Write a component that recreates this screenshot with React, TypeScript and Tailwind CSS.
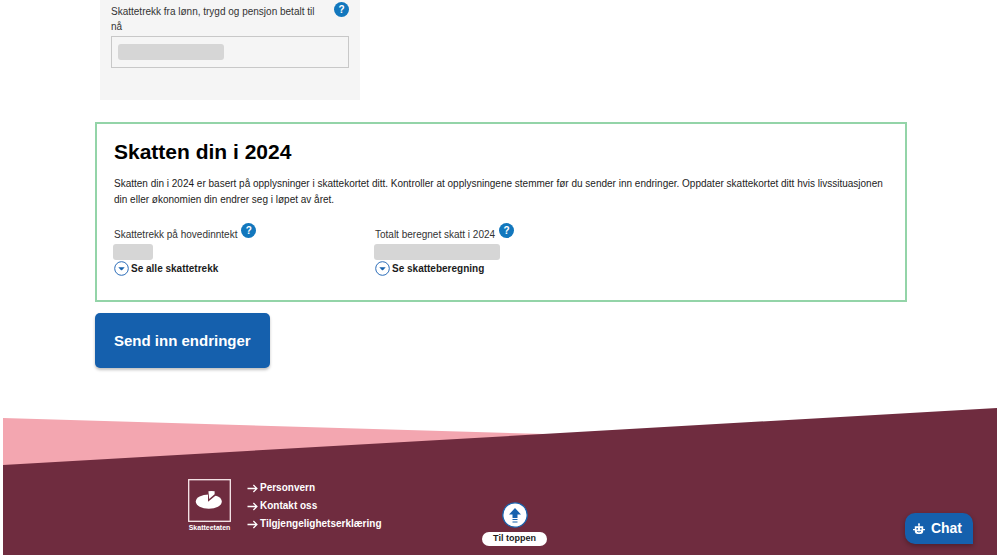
import React from "react";

function HelpButton({ label }: { label: string }) {
  return (
    <button
      type="button"
      aria-label={label}
      className="flex size-[15px] shrink-0 items-center justify-center rounded-full bg-[#1277bd] text-[10px] leading-none font-bold text-white"
    >
      ?
    </button>
  );
}

function ExpandButton({ children }: { children: React.ReactNode }) {
  return (
    <button type="button" className="flex items-center gap-[2px] text-[10px] leading-[15px] font-bold">
      <svg viewBox="0 0 15 15" className="size-[15px]" aria-hidden="true">
        <circle cx="7.5" cy="7.5" r="6.8" fill="#fff" stroke="#2a6cb8" strokeWidth="1" />
        <path d="M4.3 6.2h6.4L8.2 9q-.7.7-1.4 0z" fill="#1762ae" />
      </svg>
      {children}
    </button>
  );
}

function Figure({ label, bar, action }: { label: string; bar: string; action: string }) {
  return (
    <div className="flex flex-col items-start">
      <div className="flex items-start gap-1">
        <span className="pt-1 text-[10px] leading-[15px] text-[#333]">{label}</span>
        <HelpButton label={`Hjelp: ${label}`} />
      </div>
      <div className={`-ml-px mt-[2px] mb-px h-4 rounded-[3px] bg-[#d6d6d6] ${bar}`} />
      <ExpandButton>{action}</ExpandButton>
    </div>
  );
}

function FooterLink({ children }: { children: React.ReactNode }) {
  return (
    <a href="#" className="flex items-center gap-[2px] text-[10px] leading-[18px] font-bold text-white">
      <svg viewBox="0 0 11 9" className="h-[9px] w-[11px]" fill="none" stroke="currentColor" strokeWidth="1.3" aria-hidden="true">
        <path d="M.5 4.5h9.2M6.4 1l3.5 3.5L6.4 8" />
      </svg>
      {children}
    </a>
  );
}

export default function App() {
  return (
    <div className="bg-white font-['Liberation_Sans',Arial,sans-serif] text-[#1c1c1c]">
      <main className="pr-[93px] pl-[95px]">
        <section className="ml-[5px] w-[260px] bg-[#f5f5f5] px-[11px] pt-[2px] pb-8">
          <div className="flex items-start justify-between">
            <label htmlFor="trekk" className="w-[212px] pt-[2px] text-[10px] leading-[15px] text-[#333]">
              Skattetrekk fra lønn, trygd og pensjon betalt til nå
            </label>
            <HelpButton label="Hjelp: skattetrekk" />
          </div>
          <div className="relative mt-[2px]">
            <input id="trekk" readOnly className="block h-8 w-full border border-[#c8c8c8] bg-transparent" />
            <div className="absolute top-2 left-[7px] h-4 w-[106px] rounded-[3px] bg-[#d6d6d6]" />
          </div>
        </section>

        <section className="mt-[22px] border-2 border-[#93d4a8] px-[17px] pt-[14px] pb-6">
          <h1 className="text-[21px] leading-7 font-bold text-black">Skatten din i 2024</h1>
          <p className="mt-[10px] text-[10px] leading-4">
            Skatten din i 2024 er basert på opplysninger i skattekortet ditt. Kontroller at opplysningene stemmer før du
            sender inn endringer. Oppdater skattekortet ditt hvis livssituasjonen din eller økonomien din endrer seg i
            løpet av året.
          </p>
          <div className="mt-[15px] grid grid-cols-[261px_1fr]">
            <Figure label="Skattetrekk på hovedinntekt" bar="w-10" action="Se alle skattetrekk" />
            <Figure label="Totalt beregnet skatt i 2024" bar="w-[126px]" action="Se skatteberegning" />
          </div>
        </section>

        <button
          type="button"
          className="mt-[11px] block rounded-[5px] bg-[#1560ad] px-[19px] py-[15px] text-[15px] leading-[25px] font-bold text-white shadow-[0_2px_3px_rgba(0,0,0,0.25)]"
        >
          Send inn endringer
        </button>
      </main>

      <footer className="relative mx-[3px] mt-10">
        <svg viewBox="0 0 994 57" preserveAspectRatio="none" className="block h-[57px] w-full" aria-hidden="true">
          <path d="M0 10L542 26V57H0z" fill="#f3a6b0" />
          <path d="M0 57L994 0V57z" fill="#6f2c3f" />
        </svg>
        <div className="flex items-start gap-4 bg-[#6f2c3f] pt-[14px] pb-[22px] pl-[185px]">
          <div className="flex flex-col items-center text-white">
            <svg viewBox="0 0 43 43" className="size-[43px]" aria-hidden="true">
              <rect x=".7" y=".7" width="41.6" height="41.6" fill="none" stroke="#f8e9ec" strokeWidth="1.3" />
              <ellipse cx="20.8" cy="22.6" rx="13" ry="7.2" fill="#fff" />
              <path d="M20 22.8V14h11l-3.6 2.8z" fill="#6f2c3f" />
              <path d="M21.2 20L20.4 12.3q3-.6 6.2 0v3z" fill="#fff" />
            </svg>
            <span className="text-[7px] leading-[11px] font-bold">Skatteetaten</span>
          </div>
          <nav className="flex flex-col">
            <FooterLink>Personvern</FooterLink>
            <FooterLink>Kontakt oss</FooterLink>
            <FooterLink>Tilgjengelighetserklæring</FooterLink>
          </nav>
        </div>

        <a href="#" className="absolute bottom-[9px] left-[479px] flex flex-col items-center gap-1 text-[#1c1c1c]">
          <svg viewBox="0 0 26 26" className="size-[26px]" aria-hidden="true">
            <circle cx="13" cy="13" r="12.2" fill="#fff" stroke="#1762ae" strokeWidth="1.3" />
            <path d="M13 6l6 6.5h-3.5V16h-5v-3.5H7z" fill="#1762ae" />
            <path d="M10.5 17.5h5M10.5 20h5" stroke="#1762ae" strokeWidth="1" />
          </svg>
          <span className="w-[65px] rounded-full bg-white pb-[2px] text-center text-[9px] leading-3 font-bold">
            Til toppen
          </span>
        </a>

        <button
          type="button"
          className="absolute right-6 bottom-[11px] flex h-[31px] items-center gap-[6px] rounded-t-[10px] rounded-bl-[10px] bg-[#1560ad] pr-[11px] pl-2 text-[14px] font-bold text-white shadow-[0_2px_5px_rgba(0,0,0,0.3)]"
        >
          <svg viewBox="0 0 12 12" className="size-3" aria-hidden="true">
            <path d="M6 .8v3M0 6.6h12" stroke="#fff" strokeWidth="1.3" />
            <circle cx="6" cy="1.1" r=".9" fill="#fff" />
            <path d="M1.8 3.2h8.4v4.6Q10.200 11 7.200 11H4.800Q1.800 11 1.800 7.800z" fill="#fff" />
            <circle cx="4.2" cy="5.8" r=".9" fill="#1560ad" />
            <circle cx="7.8" cy="5.8" r=".9" fill="#1560ad" />
            <path d="M4 8.200q2 1.600 4 0" stroke="#1560ad" strokeWidth=".9" fill="none" />
          </svg>
          Chat
        </button>
      </footer>
    </div>
  );
}
